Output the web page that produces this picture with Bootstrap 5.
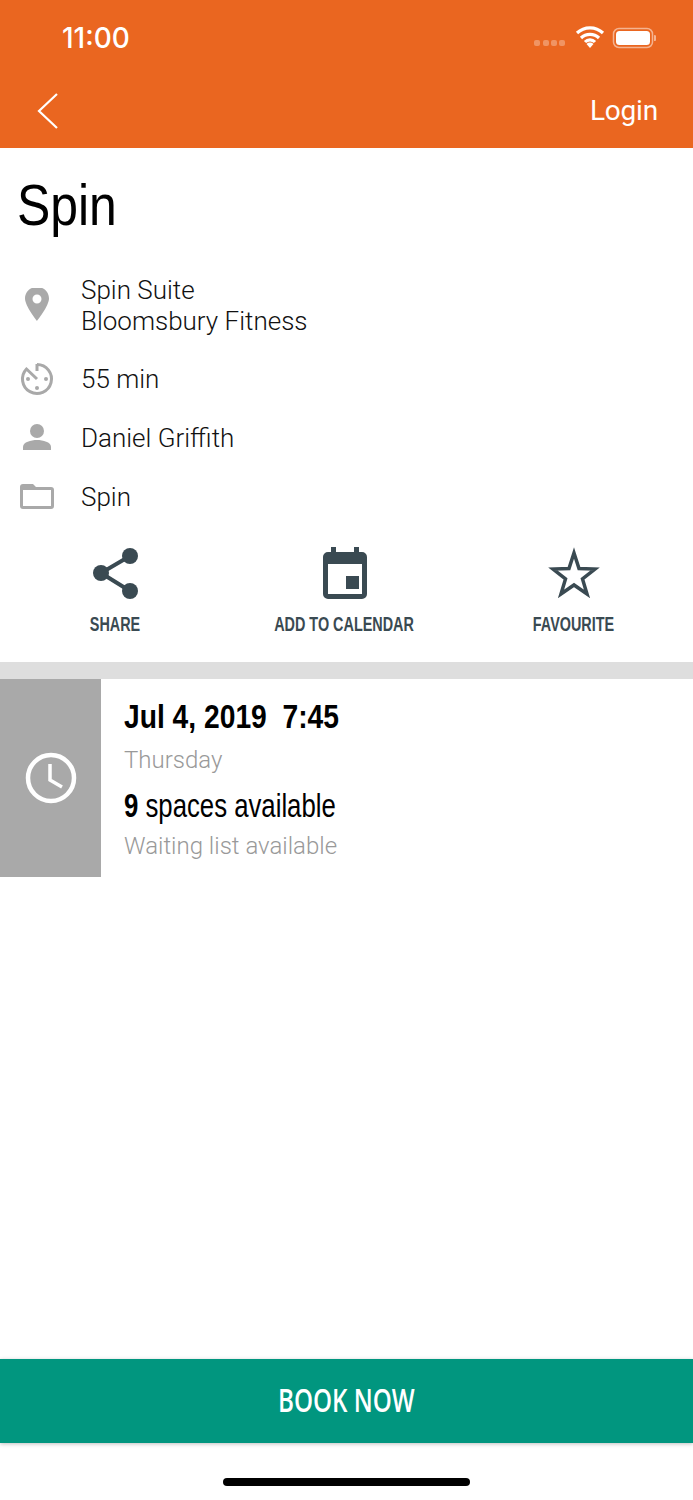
<!DOCTYPE html>
<html lang="en">
<head>
    <meta charset="UTF-8">
    <meta name="viewport" content="width=device-width, initial-scale=1.0">
    <title>Spin</title>
    <link href="https://cdn.jsdelivr.net/npm/bootstrap@5.3.0/dist/css/bootstrap.min.css" rel="stylesheet">
    <style>
        body {
            font-family: Roboto, "Liberation Sans", sans-serif;
            font-weight: 300;
            background: #fff;
            color: #111;
        }
        .screen { height: 1500px; }
        .top-bar { background: #ea6620; height: 148px; color: #fff; }
        .status-row { height: 76px; padding: 0 37px 0 62px; }
        .status-time { font-family: Inter, sans-serif; font-size: 28px; font-weight: 500; }
        .nav-row { height: 72px; padding: 0 35px 2px 37px; }
        .login-text { font-size: 28px; font-weight: 400; letter-spacing: -.2px; }
        .narrow-text { display: inline-block; white-space: nowrap; transform-origin: left center; }
        .narrow-mid { display: inline-block; white-space: nowrap; transform-origin: center; }
        .page-title { font-family: "Liberation Sans", sans-serif; font-size: 58px; line-height: 68px; color: #000; margin: 23px 0 0 17px; font-weight: 400; }
        .page-title span { transform: scaleX(.86); }
        .info-list { margin-top: 36px; }
        .info-row { font-size: 26px; line-height: 31px; margin-bottom: 23px; }
        .info-row.first-row { margin-bottom: 24px; }
        .info-icon { width: 81px; flex-shrink: 0; padding-left: 19px; }
        .info-icon svg { display: block; }
        .action-row { width: 687px; margin: 8px 0 0 1px; }
        .action-item { width: 229px; height: 94px; }
        .action-icon { height: 58px; }
        .action-label { font-family: "Liberation Sans", sans-serif; font-weight: 700; font-size: 20px; line-height: 24px; color: #3a4a52; margin-top: 8px; }
        .action-label span { transform: scaleX(.72); }
        .grey-gap { background: #dedede; height: 17px; margin-top: 22px; }
        .session-row { height: 198px; }
        .session-side { width: 101px; background: #a9a9a9; }
        .session-body { padding: 16px 0 0 23px; }
        .session-date { font-family: "Liberation Sans", sans-serif; font-weight: 700; font-size: 34px; line-height: 42px; color: #000; }
        .session-date span { transform: scaleX(.83); }
        .session-sub { font-size: 24px; line-height: 30px; color: #999; }
        .sub-day { margin-top: 8px; }
        .sub-wait { margin-top: 5px; }
        .session-spaces { font-family: "Liberation Sans", sans-serif; font-weight: 400; font-size: 33px; line-height: 40px; color: #000; margin-top: 11px; }
        .session-spaces span { transform: scaleX(.78); }
        .book-btn { background: #01967f; color: #fff; height: 84px; padding: 0 0 2px; font-family: "Open Sans", sans-serif; font-weight: 600; font-size: 32px; border: 0; border-radius: 0; width: 100%; box-shadow: 0 1px 4px rgba(0,0,0,.25); }
        .book-btn span { transform: scaleX(.757); }
        .home-area { height: 57px; }
        .home-pill { width: 247px; height: 8px; background: #000; border-radius: 4px; margin-top: 35px; }
    </style>
</head>
<body>
    <div class="screen d-flex flex-column">

        <!-- Header -->
        <div class="top-bar">
            <div class="status-row d-flex align-items-center justify-content-between">
                <span class="status-time">11:00</span>
                <svg width="122" height="24" viewBox="0 0 122 24">
                    <g fill="#fff" opacity=".3">
                        <rect x="0" y="14" width="6" height="6" rx="2"/>
                        <rect x="9" y="14" width="6" height="6" rx="2"/>
                        <rect x="17" y="14" width="6" height="6" rx="2"/>
                        <rect x="25" y="14" width="6" height="6" rx="2"/>
                    </g>
                    <path d="M43 7 A19 19 0 0 1 69 7 M47 12 A13 13 0 0 1 65 12 M51 16 A7 7 0 0 1 61 16" fill="none" stroke="#fff" stroke-width="3.2"/>
                    <path d="M56 22 l-3.500-4 a5 5 0 0 1 7 0z" fill="#fff"/>
                    <rect x="79.500" y="2.500" width="39" height="19" rx="5.500" fill="none" stroke="#fff" stroke-opacity=".5" stroke-width="1.500"/>
                    <rect x="82" y="5" width="34" height="14" rx="3.500" fill="#fff"/>
                    <path d="M120 9 a3 3 0 0 1 0 6z" fill="#fff" fill-opacity=".5"/>
                </svg>
            </div>
            <div class="nav-row d-flex align-items-center justify-content-between">
                <svg width="22" height="36" viewBox="0 0 22 36"><path d="M20 1 L2 18 L20 35" fill="none" stroke="#fff" stroke-width="2.200"/></svg>
                <span class="login-text">Login</span>
            </div>
        </div>

        <h1 class="page-title"><span class="narrow-text">Spin</span></h1>

        <!-- Details -->
        <div class="info-list">
            <div class="info-row first-row d-flex align-items-center">
                <div class="info-icon">
                    <svg width="36" height="36" viewBox="0 2 36 36"><path fill-rule="evenodd" fill="#a9a9a9" d="M18 1 C10.500 1 6 6.500 6 12.500 C6 20 18 35 18 35 C18 35 30 20 30 12.500 C30 6.500 25.500 1 18 1Z M18 8.500 a4.500 4.500 0 1 1 0 9 a4.500 4.500 0 0 1 0-9Z"/></svg>
                </div>
                <div>Spin Suite<br>Bloomsbury Fitness</div>
            </div>
            <div class="info-row d-flex align-items-center">
                <div class="info-icon">
                    <svg width="36" height="36" viewBox="0 0 36 36">
                        <path d="M18 3.500 A14.500 14.500 0 1 1 7.500 8 L18 18" fill="none" stroke="#a9a9a9" stroke-width="3"/>
                        <path d="M18 3 v7" stroke="#a9a9a9" stroke-width="3"/>
                        <g fill="#a9a9a9"><circle cx="9" cy="18" r="2"/><circle cx="27" cy="18" r="2"/><circle cx="18" cy="27" r="2"/></g>
                    </svg>
                </div>
                <div>55 min</div>
            </div>
            <div class="info-row d-flex align-items-center">
                <div class="info-icon">
                    <svg width="36" height="36" viewBox="0 0 36 36"><circle cx="18" cy="11" r="7" fill="#a9a9a9"/><path d="M4 30 v-3 C4 22 12 20 18 20 S32 22 32 27 v3z" fill="#a9a9a9"/></svg>
                </div>
                <div>Daniel Griffith</div>
            </div>
            <div class="info-row d-flex align-items-center">
                <div class="info-icon">
                    <svg width="36" height="36" viewBox="0 0 36 36"><path fill-rule="evenodd" fill="#a9a9a9" d="M4 5 h10 l3 3 h15 a3 3 0 0 1 3 3 v16 a3 3 0 0 1-3 3 H4 a3 3 0 0 1-3-3 V8 a3 3 0 0 1 3-3z M4 11 v16 h28 V11z"/></svg>
                </div>
                <div>Spin</div>
            </div>
        </div>

        <!-- Actions -->
        <div class="action-row d-flex">
            <div class="action-item text-center">
                <div class="action-icon">
                    <svg width="52" height="54" viewBox="0 0 52 54">
                        <path d="M40 10 L11 27 L40 45" fill="none" stroke="#3a4a52" stroke-width="4"/>
                        <circle cx="40" cy="10" r="8" fill="#3a4a52"/><circle cx="11" cy="27" r="8" fill="#3a4a52"/><circle cx="40" cy="45" r="8" fill="#3a4a52"/>
                    </svg>
                </div>
                <div class="action-label"><span class="narrow-mid">SHARE</span></div>
            </div>
            <div class="action-item text-center">
                <div class="action-icon">
                    <svg width="52" height="54" viewBox="0 0 52 54">
                        <path fill-rule="evenodd" fill="#3a4a52" d="M12 1 h5 v5 h18 v-5 h5 v5 h3 a5 5 0 0 1 5 5 v37 a5 5 0 0 1-5 5 H9 a5 5 0 0 1-5-5 V11 a5 5 0 0 1 5-5 h3z M9 18 v30 h34 V18z"/>
                        <rect x="27" y="30" width="13" height="13" fill="#3a4a52"/>
                    </svg>
                </div>
                <div class="action-label"><span class="narrow-mid">ADD TO CALENDAR</span></div>
            </div>
            <div class="action-item text-center">
                <div class="action-icon">
                    <svg width="52" height="54" viewBox="0 0 52 54"><path d="M26 7 L31 22.500 L47 23 L34.500 33 L39 48 L26 39 L13 48 L17.500 33 L5 23 L21 22.500z" fill="none" stroke="#3a4a52" stroke-width="3.500"/></svg>
                </div>
                <div class="action-label"><span class="narrow-mid">FAVOURITE</span></div>
            </div>
        </div>

        <div class="grey-gap"></div>

        <!-- Session -->
        <div class="session-row d-flex">
            <div class="session-side d-flex align-items-center justify-content-center">
                <svg width="52" height="52" viewBox="0 0 52 52"><circle cx="26" cy="26" r="23" fill="none" stroke="#fff" stroke-width="4.500"/><path d="M25 12 V28 L37 35" fill="none" stroke="#fff" stroke-width="3.500"/></svg>
            </div>
            <div class="session-body">
                <div class="session-date"><span class="narrow-text">Jul 4, 2019&nbsp; 7:45</span></div>
                <div class="session-sub sub-day">Thursday</div>
                <div class="session-spaces"><span class="narrow-text"><strong>9</strong> spaces available</span></div>
                <div class="session-sub sub-wait">Waiting list available</div>
            </div>
        </div>

        <div class="flex-grow-1"></div>

        <button type="button" class="btn book-btn"><span class="narrow-mid">BOOK NOW</span></button>
        <div class="home-area d-flex justify-content-center">
            <div class="home-pill"></div>
        </div>
    </div>

    <script src="https://cdn.jsdelivr.net/npm/bootstrap@5.3.0/dist/js/bootstrap.bundle.min.js"></script>
</body>
</html>
